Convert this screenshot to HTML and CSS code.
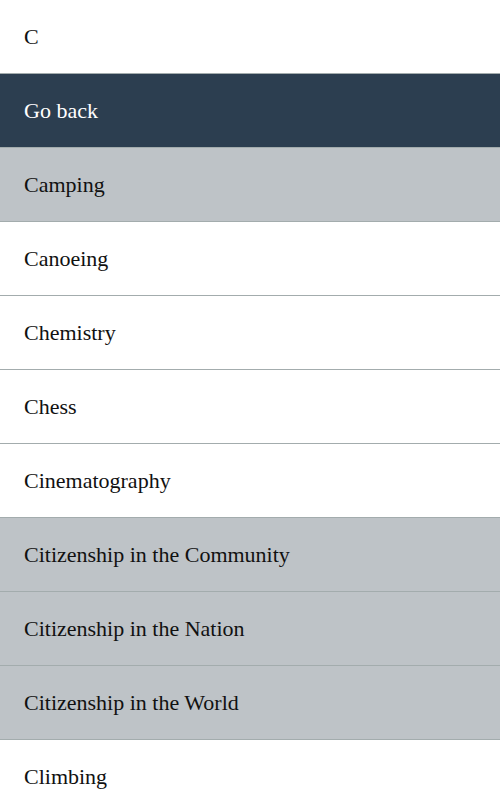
FILE: index.html
```html
<!DOCTYPE html>
<html>
<head>
<meta charset="utf-8">
<link rel="stylesheet" href="styles.css">
</head>
<body>
<ul class="list">
  <li class="row header">C</li>
  <li class="row back">Go back</li>
  <li class="row selected">Camping</li>
  <li class="row">Canoeing</li>
  <li class="row">Chemistry</li>
  <li class="row">Chess</li>
  <li class="row">Cinematography</li>
  <li class="row selected">Citizenship in the Community</li>
  <li class="row selected">Citizenship in the Nation</li>
  <li class="row selected">Citizenship in the World</li>
  <li class="row">Climbing</li>
</ul>
</body>
</html>
```
FILE: styles.css
```css
html, body {
  margin: 0;
  padding: 0;
  background: #ffffff;
}
.list {
  list-style: none;
  margin: 0;
  padding: 0;
  font-family: "Liberation Serif", "Times New Roman", serif;
  font-size: 22px;
  color: #111111;
}
.row {
  height: 73px;
  display: flex;
  align-items: center;
  padding: 0 24px;
  border-bottom: 1px solid #a3acad;
  background: #ffffff;
}
.back {
  background: #2c3e50;
  color: #ffffff;
}
.selected {
  background: #bec3c7;
}
```
